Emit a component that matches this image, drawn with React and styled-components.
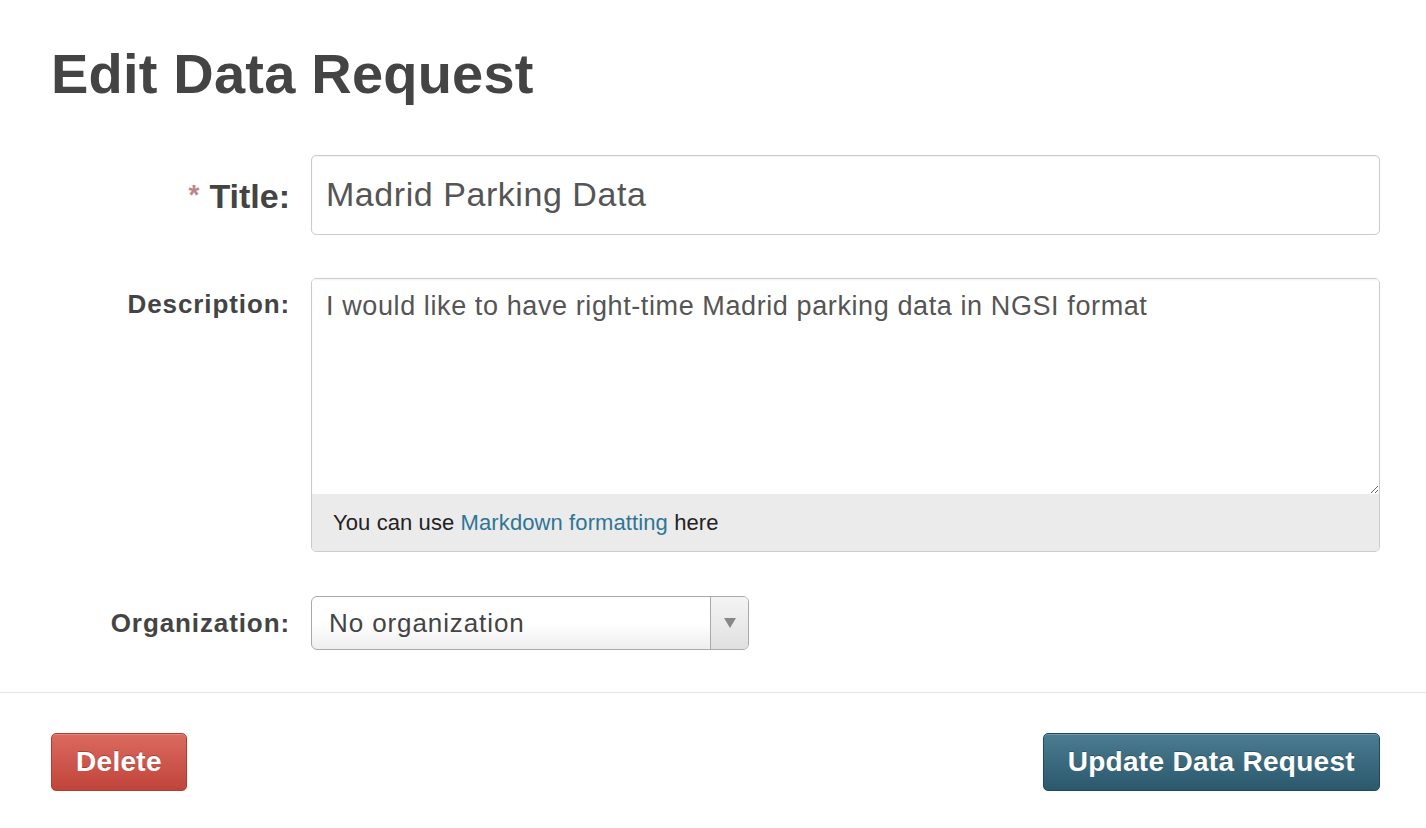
import React, { useState } from "react";
import styled, { createGlobalStyle } from "styled-components";

const GlobalStyle = createGlobalStyle`
  body {
    margin: 0;
    background: #fff;
    font-family: "Liberation Sans", Arial, sans-serif;
    color: #444;
  }
`;

const Page = styled.div`
  width: 1426px;
  padding-top: 46px;
`;

const Heading = styled.h1`
  margin: 0 0 53px 51px;
  font-size: 56px;
  line-height: 56px;
  font-weight: 700;
  color: #444;
  letter-spacing: 0.2px;
`;

const Form = styled.form`
  display: flex;
  flex-direction: column;
  padding-right: 46px;
`;

const Field = styled.div`
  display: grid;
  grid-template-columns: 290px 1fr;
  column-gap: 21px;
  align-items: start;
  margin-bottom: ${(p) => p.$gap || 0}px;
`;

const Label = styled.label`
  text-align: right;
  font-weight: 700;
  color: #444;
  font-size: ${(p) => (p.$large ? "34px" : "26px")};
  line-height: ${(p) => (p.$large ? "80px" : "30px")};
  padding-top: ${(p) => p.$top || 0}px;
  letter-spacing: ${(p) => (p.$large ? "0" : "0.9px")};
`;

const Required = styled.span`
  color: #c08585;
  font-size: 28px;
  margin-right: 10px;
  vertical-align: 4px;
`;

const TextInput = styled.input`
  box-sizing: border-box;
  width: 100%;
  height: 80px;
  margin: 0;
  padding: 0 14px 2px;
  border: 1px solid #ccc;
  border-radius: 5px;
  font-family: "Liberation Sans", Arial, sans-serif;
  font-size: 34px;
  letter-spacing: 0.55px;
  color: #555;
  box-shadow: inset 0 1px 2px rgba(0, 0, 0, 0.06);
  outline: none;
`;

const TextareaBox = styled.div`
  border: 1px solid #ccc;
  border-radius: 5px;
  overflow: hidden;
  display: flex;
  flex-direction: column;
`;

const TextArea = styled.textarea`
  box-sizing: border-box;
  display: block;
  width: 100%;
  height: 215px;
  margin: 0;
  padding: 10px 14px 8px;
  border: none;
  font-family: "Liberation Sans", Arial, sans-serif;
  font-size: 27px;
  line-height: 34px;
  letter-spacing: 0.6px;
  color: #555;
  resize: vertical;
  outline: none;
  box-shadow: inset 0 1px 2px rgba(0, 0, 0, 0.06);
`;

const Hint = styled.div`
  background: #ebebeb;
  height: 57px;
  padding-left: 21px;
  font-size: 22px;
  line-height: 57px;
  letter-spacing: 0.1px;
  color: #222;
`;

const HintLink = styled.a`
  color: #2f7595;
  text-decoration: none;
`;

const Select = styled.div`
  box-sizing: border-box;
  width: 438px;
  height: 54px;
  display: flex;
  border: 1px solid #aaa;
  border-radius: 6px;
  overflow: hidden;
  background: linear-gradient(#fff 50%, #eee);
`;

const SelectValue = styled.div`
  flex: 1;
  padding-left: 17px;
  font-size: 26px;
  line-height: 52px;
  letter-spacing: 0.9px;
  color: #444;
`;

const SelectArrow = styled.div`
  width: 37px;
  border-left: 1px solid #aaa;
  background: linear-gradient(#f4f4f4, #e0e0e0);
  display: flex;
  align-items: center;
  justify-content: center;
`;

const Divider = styled.hr`
  margin: 42px 0 0;
  border: none;
  border-top: 1.5px solid #e5e5e5;
`;

const Actions = styled.div`
  display: flex;
  justify-content: space-between;
  padding: 40px 46px 0 51px;
`;

const Button = styled.button`
  height: 58px;
  padding: 0 ${(p) => p.$pad}px;
  border-radius: 5px;
  font-family: "Liberation Sans", Arial, sans-serif;
  font-size: 28px;
  font-weight: 700;
  letter-spacing: 0.3px;
  color: #fff;
  text-shadow: 0 -1px 0 rgba(0, 0, 0, 0.25);
  box-shadow: inset 0 1px 0 rgba(255, 255, 255, 0.2), 0 1px 2px rgba(0, 0, 0, 0.08);
  cursor: pointer;
  border: 1px solid ${(p) => (p.$danger ? "#b03d33" : "#204b5f")};
  background: ${(p) =>
    p.$danger
      ? "linear-gradient(#dc6a5f, #c0443a)"
      : "linear-gradient(#4b7c91, #2b586c)"};
`;

export default function App() {
  const [title, setTitle] = useState("Madrid Parking Data");
  const [description, setDescription] = useState(
    "I would like to have right-time Madrid parking data in NGSI format"
  );

  return (
    <Page>
      <GlobalStyle />
      <Heading>Edit Data Request</Heading>
      <Form onSubmit={(e) => e.preventDefault()}>
        <Field $gap={42}>
          <Label $large>
            <Required>*</Required>Title:
          </Label>
          <TextInput value={title} onChange={(e) => setTitle(e.target.value)} />
        </Field>
        <Field $gap={44}>
          <Label $top={11}>Description:</Label>
          <TextareaBox>
            <TextArea
              value={description}
              onChange={(e) => setDescription(e.target.value)}
            />
            <Hint>
              You can use <HintLink href="#">Markdown formatting</HintLink> here
            </Hint>
          </TextareaBox>
        </Field>
        <Field>
          <Label $top={12}>Organization:</Label>
          <Select>
            <SelectValue>No organization</SelectValue>
            <SelectArrow>
              <svg width="12" height="10" viewBox="0 0 12 10">
                <path d="M0 0 H12 L6 10 Z" fill="#888" />
              </svg>
            </SelectArrow>
          </Select>
        </Field>
      </Form>
      <Divider />
      <Actions>
        <Button $danger $pad={24}>
          Delete
        </Button>
        <Button $pad={24}>Update Data Request</Button>
      </Actions>
    </Page>
  );
}
